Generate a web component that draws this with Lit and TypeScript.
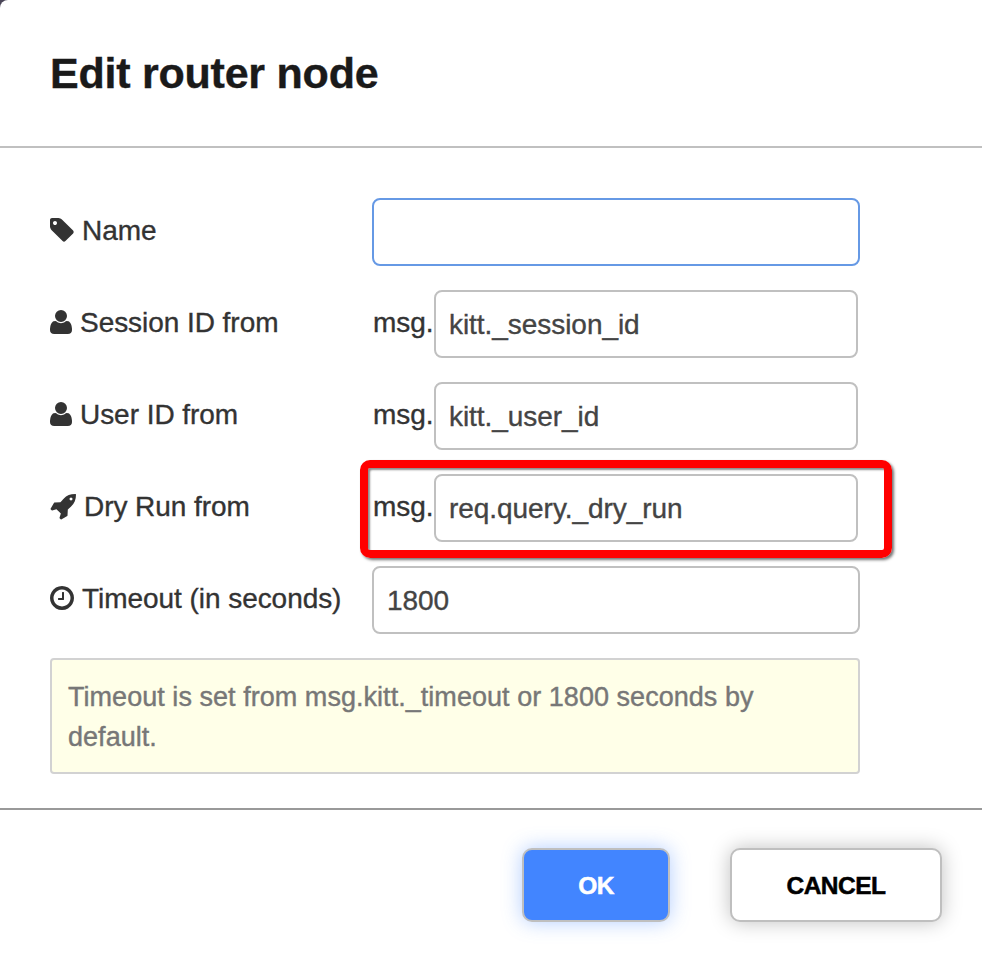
import { LitElement, html, css, nothing } from "lit";
import { customElement, property } from "lit/decorators.js";

type IconName = "tag" | "user" | "rocket" | "clock";

interface Glyph {
  box: string;
  width: number;
  height: number;
  flip: number;
  path: string;
}

// flip: top of the glyph in font units (y pointing up); 0 for y-down paths
const GLYPHS: Record<IconName, Glyph> = {
  tag: {
    box: "128 128 1536 1536",
    width: 24,
    height: 24,
    flip: 0,
    path: "M576 448q0-53-37.5-90.5t-90.5-37.5-90.5 37.5-37.5 90.5 37.5 90.5 90.5 37.5 90.5-37.5 37.5-90.5zm1067 576q0 53-37 90l-491 492q-39 37-91 37-53 0-90-37l-715-716q-38-37-64.5-101t-26.5-117v-416q0-52 38-90t90-38h416q53 0 117 26.5t102 64.5l715 714q37 39 37 91z",
  },
  user: {
    box: "0 0 1408 1536",
    width: 22,
    height: 24,
    flip: 1408,
    path: "M1408 131q0 -120 -73 -189.5t-194 -69.5h-874q-121 0 -194 69.5t-73 189.5q0 53 3.5 103.5t14 109t26.5 108.5t43 97.5t62 81t85.5 53.5t111.5 20q9 0 42 -21.5t74.5 -48t108 -48t133.5 -21.5t133.5 21.5t108 48t74.5 48t42 21.5q61 0 111.5 -20t85.5 -53.5t62 -81t43 -97.5t26.5 -108.5t14 -109t3.5 -103.5zM1088 1024q0 -159 -112.5 -271.5t-271.5 -112.5t-271.5 112.5t-112.5 271.5t112.5 271.5t271.5 112.5t271.5 -112.5t112.5 -271.5z",
  },
  rocket: {
    box: "0 0 1664 1536",
    width: 26,
    height: 24,
    flip: 1408,
    path: "M1440 1088q0 40 -28 68t-68 28t-68 -28t-28 -68t28 -68t68 -28t68 28t28 68zM1664 1376q0 -249 -75.5 -430.5t-253.5 -360.5q-81 -80 -195 -176l-20 -379q-2 -16 -16 -26l-384 -224q-7 -4 -16 -4q-12 0 -23 9l-64 64q-13 14 -8 32l85 276l-281 281l-276 -85q-3 -1 -9 -1q-14 0 -23 9l-64 64q-17 19 -5 39l224 384q10 14 26 16l379 20q96 114 176 195q188 187 358 258t431 71q14 0 24 -9.5t10 -22.5z",
  },
  clock: {
    box: "0 0 1536 1536",
    width: 24,
    height: 24,
    flip: 1408,
    path: "M896 992v-448q0 -14 -9 -23t-23 -9h-320q-14 0 -23 9t-9 23v64q0 14 9 23t23 9h224v352q0 14 9 23t23 9h64q14 0 23 -9t9 -23zM1312 640q0 148 -73 273t-198 198t-273 73t-273 -73t-198 -198t-73 -273t73 -273t198 -198t273 -73t273 73t198 198t73 273zM1536 640q0 -209 -103 -385.5t-279.5 -279.5t-385.5 -103t-385.5 103t-279.5 279.5t-103 385.5t103 385.5t279.5 279.5t385.5 103t385.5 -103t279.5 -279.5t103 -385.5z",
  },
};

@customElement("form-icon")
class FormIcon extends LitElement {
  static styles = css`
    :host {
      display: block;
      flex: none;
    }
    .glyph {
      display: block;
      overflow: visible;
      fill: currentColor;
    }
  `;

  @property() name: IconName = "tag";

  render() {
    const g = GLYPHS[this.name];
    return html`<svg class="glyph" width=${g.width} height=${g.height} viewBox=${g.box} aria-hidden="true">
      <path transform=${g.flip ? `translate(0 ${g.flip}) scale(1 -1)` : "scale(1)"} d=${g.path}></path>
    </svg>`;
  }
}

@customElement("form-row")
class FormRow extends LitElement {
  static styles = css`
    :host {
      display: flex;
      position: relative;
      height: 68px;
      width: 810px;
      color: #333;
      font-size: 28px;
      line-height: 32px;
      letter-spacing: -0.05px;
    }
    .label {
      display: flex;
      flex: none;
      width: 322px;
      gap: 8px;
      padding-top: 17px;
      box-sizing: border-box;
      white-space: nowrap;
    }
    .text,
    .prefix,
    .field {
      -webkit-text-stroke: 0.35px currentColor;
    }
    .label form-icon {
      margin-top: 3px;
    }
    .prefix {
      flex: none;
      width: 62px;
      box-sizing: border-box;
      padding: 17px 0 0 1px;
    }
    .field {
      flex: 1;
      min-width: 0;
      height: 68px;
      box-sizing: border-box;
      margin: 0;
      padding: 2px 12px 0 13px;
      border: 2px solid #c0c0c0;
      border-radius: 8px;
      background: #fff;
      color: #444;
      font: inherit;
      letter-spacing: -0.05px;
      outline: none;
    }
    .prefixed {
      margin-right: 2px;
    }
    .active {
      border-color: #6699e5;
    }
    .highlight {
      position: absolute;
      left: 310px;
      top: -14px;
      width: 532px;
      height: 98px;
      box-sizing: border-box;
      border: 8px solid #f00;
      border-radius: 10px;
      box-shadow: 2px 2px 3px rgba(0, 0, 0, 0.55), inset 2px 2px 2px rgba(0, 0, 0, 0.45);
      pointer-events: none;
    }
  `;

  @property() icon: IconName = "tag";
  @property() label = "";
  @property() prefixText = "";
  @property() value = "";
  @property({ type: Boolean }) active = false;
  @property({ type: Boolean }) marked = false;

  render() {
    return html`
      <div class="label"><form-icon name=${this.icon}></form-icon><span class="text">${this.label}</span></div>
      ${this.prefixText ? html`<span class="prefix">${this.prefixText}</span>` : nothing}
      <input
        class="field ${this.prefixText ? "prefixed" : ""} ${this.active ? "active" : ""}"
        type="text"
        aria-label=${this.label}
        .value=${this.value}
      />
      ${this.marked ? html`<div class="highlight"></div>` : nothing}
    `;
  }
}

@customElement("app-root")
class AppRoot extends LitElement {
  static styles = css`
    :host {
      display: block;
      height: 954px;
      overflow: hidden;
      background: #4a4658;
      font-family: "Liberation Sans", Arial, sans-serif;
    }
    .dialog {
      display: flex;
      flex-direction: column;
      height: 100%;
      background: #fff;
      border-top-left-radius: 8px;
    }
    .header {
      height: 148px;
      box-sizing: border-box;
      padding: 48px 48px 0;
      border-bottom: 2px solid #c0c0c0;
    }
    .title {
      margin: 0;
      padding-left: 2px;
      font-size: 43px;
      line-height: 50px;
      letter-spacing: -0.23px;
      font-weight: 700;
      color: #1a1a1a;
      -webkit-text-stroke: 0.4px currentColor;
    }
    .body {
      display: flex;
      flex-direction: column;
      gap: 24px;
      height: 660px;
      box-sizing: border-box;
      padding: 50px 50px 0;
    }
    .tips {
      width: 810px;
      height: 116px;
      box-sizing: border-box;
      padding: 17px 16px;
      border: 2px solid #d2d2d2;
      border-radius: 4px;
      background: #ffffe8;
      color: #777;
      font-size: 27px;
      line-height: 40px;
      letter-spacing: 0.04px;
      -webkit-text-stroke: 0.4px currentColor;
    }
    .footer {
      display: flex;
      flex: 1;
      justify-content: flex-end;
      align-items: flex-start;
      gap: 60px;
      padding: 38px 40px 0 0;
      border-top: 2px solid #999;
    }
    .button {
      height: 74px;
      box-sizing: border-box;
      padding: 2px 0 0;
      border: 2px solid #bfbfbf;
      border-radius: 10px;
      font-family: inherit;
      font-size: 24.5px;
      font-weight: 700;
      letter-spacing: -0.5px;
      -webkit-text-stroke: 0.5px currentColor;
    }
    .ok {
      width: 148px;
      background: #4285ff;
      color: #fff;
      box-shadow: 0 0 20px rgba(66, 133, 255, 0.4);
    }
    .cancel {
      width: 212px;
      background: #fff;
      color: #000;
      box-shadow: 0 0 20px rgba(0, 0, 0, 0.25);
    }
  `;

  render() {
    return html`
      <div class="dialog">
        <div class="header"><h1 class="title">Edit router node</h1></div>
        <div class="body">
          <form-row icon="tag" label="Name" active></form-row>
          <form-row icon="user" label="Session ID from" prefixText="msg." value="kitt._session_id"></form-row>
          <form-row icon="user" label="User ID from" prefixText="msg." value="kitt._user_id"></form-row>
          <form-row icon="rocket" label="Dry Run from" prefixText="msg." value="req.query._dry_run" marked></form-row>
          <form-row icon="clock" label="Timeout (in seconds)" value="1800"></form-row>
          <div class="tips">Timeout is set from msg.kitt._timeout or 1800 seconds by default.</div>
        </div>
        <div class="footer">
          <button class="button ok">OK</button>
          <button class="button cancel">CANCEL</button>
        </div>
      </div>
    `;
  }
}
